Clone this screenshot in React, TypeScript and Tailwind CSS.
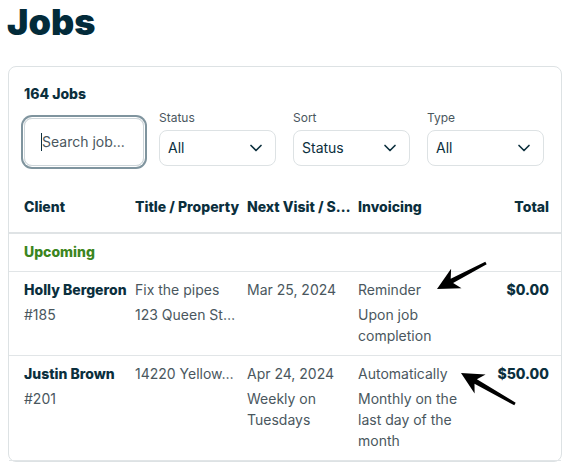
import { ChevronDown } from 'lucide-react';

type SelectProps = { label: string; value: string; className: string };

function FilterSelect({ label, value, className }: SelectProps) {
    return (
        <div className={className}>
            <p className="text-[12px] leading-4 text-[#4a575e]">{label}</p>
            <div className="mt-1 h-9 rounded-lg border border-[#dde2e4] pl-2 pr-[9px] flex items-center justify-between">
                <span className="text-sm text-[#0b2f3d]">{value}</span>
                <ChevronDown size={20} strokeWidth={2} className="text-[#0b2f3d]" />
            </div>
        </div>
    );
}

const rowGrid = 'grid grid-cols-[100px_101px_100px_100px_1fr] gap-x-[11px] pl-[15px] pr-[12px]';

export default function App() {
    return (
        <div className="relative w-[571px] h-[462px] overflow-hidden bg-white font-['Inter',sans-serif] text-[#0b2f3d]">
            <h1 className="pl-[7px] text-[36px] leading-[44px] font-black text-[#032b3a]">Jobs</h1>

            <div className="mt-[22px] ml-2 w-[554px] rounded-lg border border-[#dde2e4]">
                <div className="px-[15px] pt-[17px]">
                    <p className="text-sm leading-5 font-extrabold">164 Jobs</p>
                    <div className="mt-[6px] flex items-end">
                        <div className="w-[120px] h-12 rounded-lg border border-[#cdd5d9] ring-2 ring-[#7f949e] ring-offset-1 flex items-center pl-4">
                            <span className="w-px h-[18px] bg-[#0b2f3d]" />
                            <span className="text-sm text-[#4a575e]">Search job...</span>
                        </div>
                        <FilterSelect label="Status" value="All" className="ml-[15px] w-[117px]" />
                        <FilterSelect label="Sort" value="Status" className="ml-[17px] w-[117px]" />
                        <FilterSelect label="Type" value="All" className="ml-[17px] w-[117px]" />
                    </div>
                </div>

                <div className={`${rowGrid} pt-[31px] pb-[15px] border-b-2 border-[#dfe3e5] text-sm leading-5 font-extrabold`}>
                    <span>Client</span>
                    <span className="whitespace-nowrap">Title / Property</span>
                    <span className="whitespace-nowrap">Next Visit / S…</span>
                    <span>Invoicing</span>
                    <span className="text-right">Total</span>
                </div>

                <div className="pl-[15px] pt-2 pb-[9px] border-b border-[#e1e5e7] text-sm leading-5 font-extrabold text-[#3b8520]">
                    Upcoming
                </div>

                <div className={`${rowGrid} pt-2 pb-[9px] border-b border-[#e1e5e7] text-sm text-[#4a575e]`}>
                    <div>
                        <p className="leading-5 font-extrabold text-[#0b2f3d] whitespace-nowrap">Holly Bergeron</p>
                        <p className="mt-1 leading-[21px]">#185</p>
                    </div>
                    <div>
                        <p className="leading-5">Fix the pipes</p>
                        <p className="mt-1 leading-[21px] whitespace-nowrap">123 Queen St…</p>
                    </div>
                    <div>
                        <p className="leading-5 whitespace-nowrap">Mar 25, 2024</p>
                    </div>
                    <div>
                        <p className="leading-5">Reminder</p>
                        <p className="mt-1 leading-[21px]">Upon job completion</p>
                    </div>
                    <p className="leading-5 font-extrabold text-right text-[#0b2f3d]">$0.00</p>
                </div>

                <div className={`${rowGrid} pt-2 pb-[9px] border-b border-[#e1e5e7] text-sm text-[#4a575e]`}>
                    <div>
                        <p className="leading-5 font-extrabold text-[#0b2f3d] whitespace-nowrap">Justin Brown</p>
                        <p className="mt-1 leading-[21px]">#201</p>
                    </div>
                    <div>
                        <p className="leading-5 whitespace-nowrap">14220 Yellow…</p>
                    </div>
                    <div>
                        <p className="leading-5 whitespace-nowrap">Apr 24, 2024</p>
                        <p className="mt-1 leading-[21px]">Weekly on Tuesdays</p>
                    </div>
                    <div>
                        <p className="leading-5">Automatically</p>
                        <p className="mt-1 leading-[21px]">Monthly on the last day of the month</p>
                    </div>
                    <p className="leading-5 font-extrabold text-right text-[#0b2f3d]">$50.00</p>
                </div>
            </div>

            {/* annotation arrows drawn over the table */}
            <svg className="absolute left-0 top-0 pointer-events-none" width="571" height="462" viewBox="0 0 571 462">
                <polygon
                    fill="#000"
                    points="437,289 451.1,268.8 450.7,278.7 485.3,261.7 486.7,264.3 453.1,283.1 461.5,288.2"
                />
                <polygon
                    fill="#000"
                    points="461,373 485.6,374.5 476.9,379.3 515.7,402.7 514.3,405.3 474.5,383.7 474.6,393.5"
                />
            </svg>
        </div>
    );
}
